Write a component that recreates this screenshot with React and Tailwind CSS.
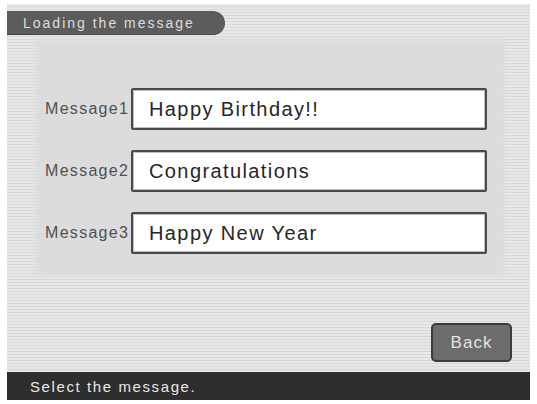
import React from "react";

const messages = ["Happy Birthday!!", "Congratulations", "Happy New Year"];

function MessageRow({ index, text }) {
  return (
    <div className="flex items-center">
      <span className="w-[92px] pl-[6px] text-[16px] tracking-[1.3px] text-[#505050] text-right pr-[3px] leading-none">
        Message{index}
      </span>
      <div className="flex-1 h-[42px] border-2 border-[#4a4a4a] rounded-[2px] bg-white flex items-center pl-[16px] shadow-[inset_0_0_0_1px_#bdbdbd]">
        <span className="text-[20px] tracking-[1.4px] text-[#262626]">{text}</span>
      </div>
    </div>
  );
}

export default function App() {
  return (
    <div
      className="w-[537px] h-[404px] bg-white px-[7px] pt-[4px] pb-[4px]"
      style={{ fontFamily: '"Liberation Sans", Arial, sans-serif' }}
    >
      <div className="h-full flex flex-col bg-[repeating-linear-gradient(to_bottom,#e8e8e8_0px,#e8e8e8_2px,#d8d8d8_2px,#d8d8d8_3px)]">
        {/* title tab */}
        <div className="mt-[7px] h-[24px] w-[218px] bg-[#5c5c5c] rounded-r-full flex items-center pl-[16px] border-b border-[#3e3e3e]">
          <span className="text-[14px] tracking-[2px] text-[#dedede] leading-none">
            Loading the message
          </span>
        </div>

        {/* message list panel */}
        <div className="mt-[7px] ml-[32px] w-[463px] h-[230px] bg-[#dcdcdc] shadow-[0_0_6px_3px_#dcdcdc] flex flex-col gap-[20px] pt-[46px] pr-[15px]">
          {messages.map((m, i) => (
            <MessageRow key={m} index={i + 1} text={m} />
          ))}
        </div>

        <div className="flex-1 flex items-end justify-end pr-[18px] pb-[10px]">
          <button className="w-[81px] h-[39px] bg-[#6c6c6c] border-2 border-[#3c3c3c] rounded-[5px] text-[17px] tracking-[1px] text-[#e2e2e2]">
            Back
          </button>
        </div>

        {/* status bar */}
        <div className="h-[28px] bg-[#2e2e2e] flex items-center pl-[23px]">
          <span className="text-[15px] tracking-[1.6px] text-[#e8e8e8] leading-none">
            Select the message.
          </span>
        </div>
      </div>
    </div>
  );
}
